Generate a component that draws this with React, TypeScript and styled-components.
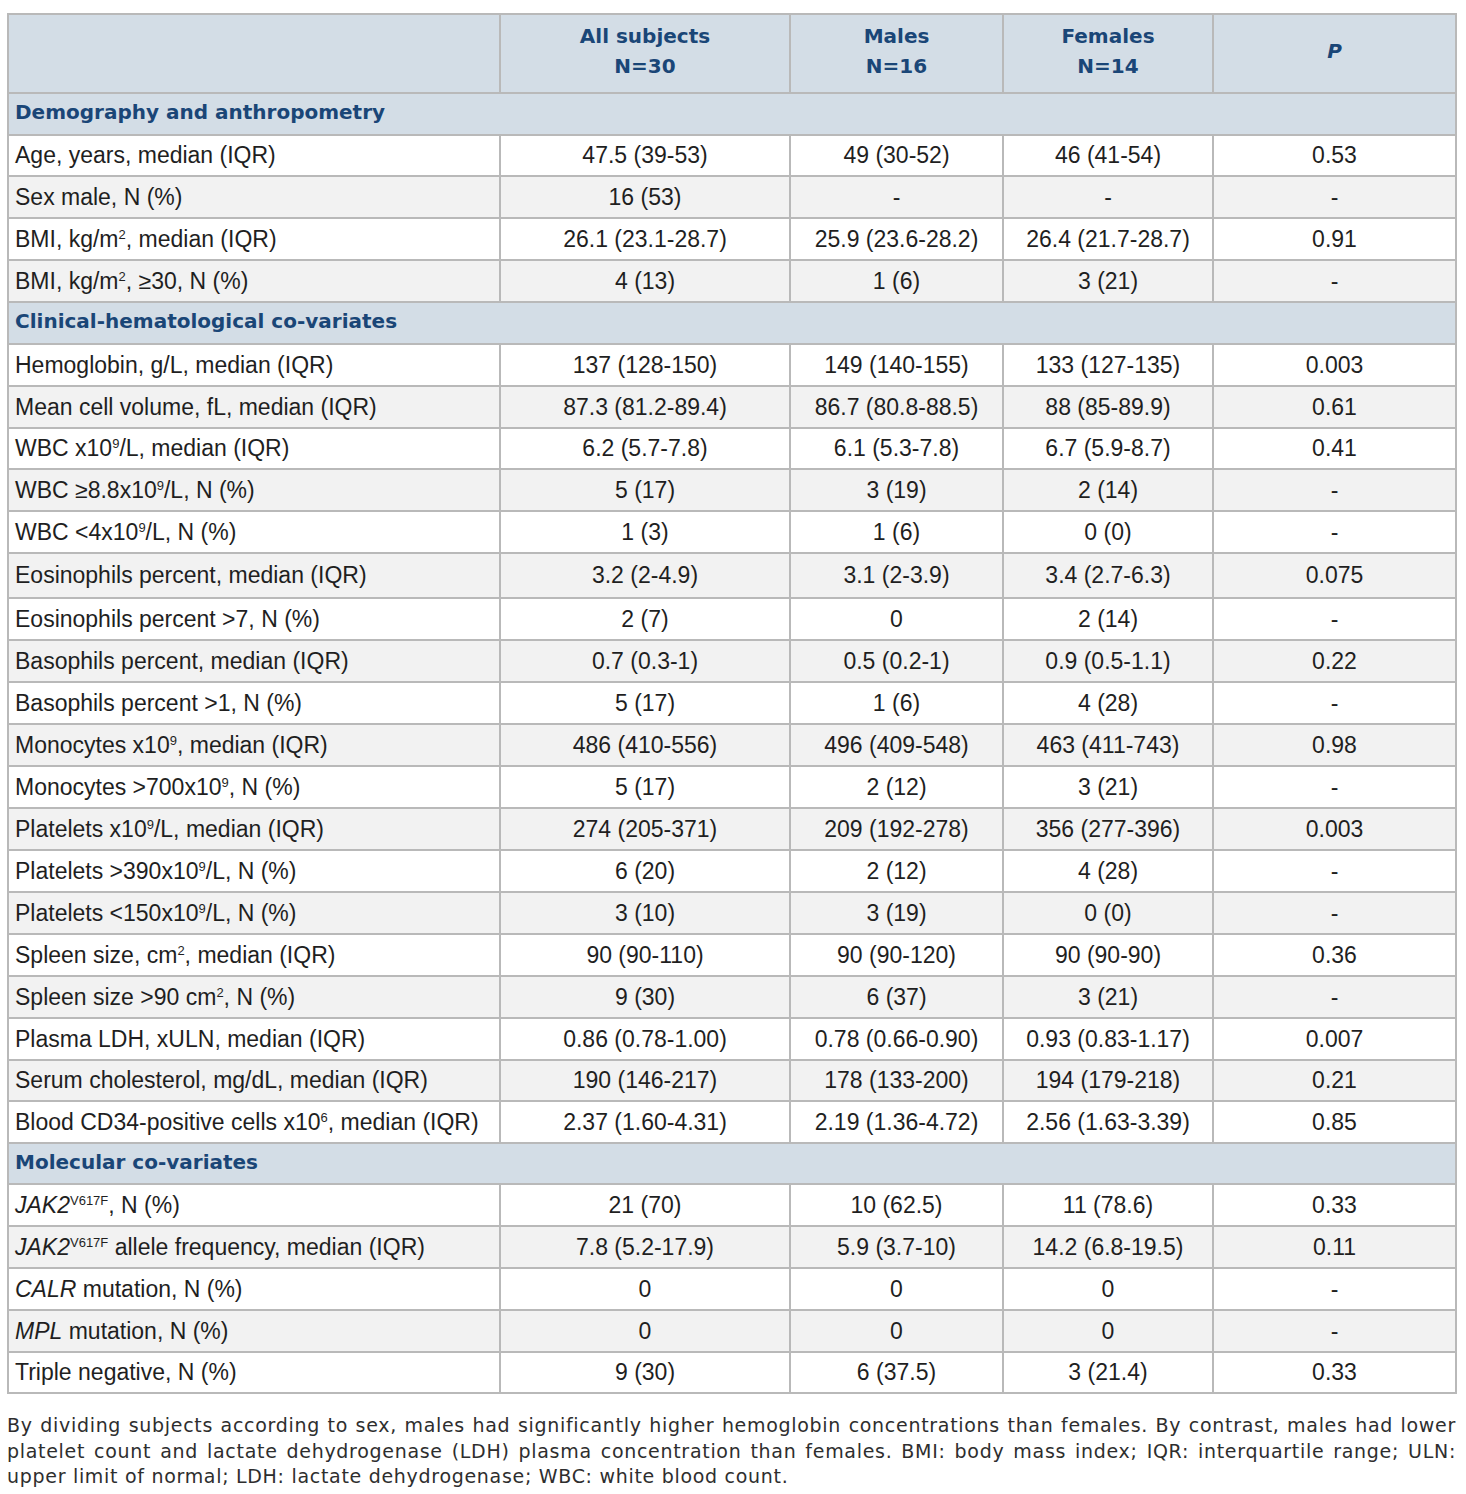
import React from "react";
import styled, { createGlobalStyle } from "styled-components";

const Global = createGlobalStyle`
  html, body { margin: 0; padding: 0; background: #ffffff; }
  body { font-family: "Liberation Sans", Arial, sans-serif; color: #1f1f1f; }
`;

const Page = styled.div`
  padding: 13px 11px 10px 7px;
  width: 1449px;
`;

const Table = styled.table`
  width: 1449px;
  table-layout: fixed;
  border-collapse: collapse;
  border: 2px solid #b9b9b9;
  font-family: "Liberation Sans", Arial, sans-serif;
  font-size: 23px;
  color: #1f1f1f;
`;

const HeadRow = styled.tr`
  height: 79px;
  background: #d3dde6;
`;

const HeadCell = styled.th`
  border: 2px solid #b9b9b9;
  padding: 0 6px 5px;
  text-align: center;
  vertical-align: middle;
  font-family: "DejaVu Sans", Verdana, sans-serif;
  font-weight: 700;
  font-size: 20px;
  line-height: 30px;
  color: #1a4677;
`;

const PLabel = styled.span`
  font-style: italic;
`;

const SectionRow = styled.tr<{ $h: number }>`
  height: ${(p) => p.$h}px;
  background: #d3dde6;
`;

const SectionCell = styled.td`
  border: 2px solid #b9b9b9;
  padding: 0 6px 4px;
  font-family: "DejaVu Sans", Verdana, sans-serif;
  font-weight: 700;
  font-size: 20px;
  color: #1a4677;
  vertical-align: middle;
`;

const DataRow = styled.tr<{ $alt: boolean; $h: number }>`
  height: ${(p) => p.$h}px;
  background: ${(p) => (p.$alt ? "#f2f2f2" : "#ffffff")};
`;

const LabelCell = styled.td`
  border: 2px solid #b9b9b9;
  padding: 0 6px;
  text-align: left;
  vertical-align: middle;
  white-space: nowrap;
`;

const ValueCell = styled.td`
  border: 2px solid #b9b9b9;
  padding: 0 4px;
  text-align: center;
  vertical-align: middle;
  white-space: nowrap;
`;

const Sup = styled.sup`
  font-size: 13px;
  line-height: 0;
  vertical-align: 8px;
`;

const Gene = styled.i`
  font-style: italic;
`;

const Caption = styled.div`
  margin-top: 19px;
  width: 1449px;
  font-family: "DejaVu Sans", Verdana, sans-serif;
  font-size: 19px;
  line-height: 25.5px;
  color: #2e2e2e;
  letter-spacing: 0.7px;
`;

const CaptionLine = styled.div<{ $last?: boolean }>`
  text-align: justify;
  text-align-last: ${(p) => (p.$last ? "left" : "justify")};
  white-space: nowrap;
`;

type Row = { label: React.ReactNode; v: [string, string, string, string]; h?: number };
type Section = { title: string; h?: number; rows: Row[] };

const x9 = (
  <>
    x10<Sup>9</Sup>
  </>
);
const m2 = (
  <>
    m<Sup>2</Sup>
  </>
);
const jak = (
  <>
    <Gene>JAK2</Gene>
    <Sup>V617F</Sup>
  </>
);

const sections: Section[] = [
  {
    title: "Demography and anthropometry",
    rows: [
      { label: "Age, years, median (IQR)", v: ["47.5 (39-53)", "49 (30-52)", "46 (41-54)", "0.53"], h: 41 },
      { label: "Sex male, N (%)", v: ["16 (53)", "-", "-", "-"] },
      { label: <>BMI, kg/{m2}, median (IQR)</>, v: ["26.1 (23.1-28.7)", "25.9 (23.6-28.2)", "26.4 (21.7-28.7)", "0.91"] },
      { label: <>BMI, kg/{m2}, ≥30, N (%)</>, v: ["4 (13)", "1 (6)", "3 (21)", "-"] },
    ],
  },
  {
    title: "Clinical-hematological co-variates",
    rows: [
      { label: "Hemoglobin, g/L, median (IQR)", v: ["137 (128-150)", "149 (140-155)", "133 (127-135)", "0.003"] },
      { label: "Mean cell volume, fL, median (IQR)", v: ["87.3 (81.2-89.4)", "86.7 (80.8-88.5)", "88 (85-89.9)", "0.61"] },
      { label: <>WBC {x9}/L, median (IQR)</>, v: ["6.2 (5.7-7.8)", "6.1 (5.3-7.8)", "6.7 (5.9-8.7)", "0.41"], h: 41 },
      { label: <>WBC ≥8.8{x9}/L, N (%)</>, v: ["5 (17)", "3 (19)", "2 (14)", "-"] },
      { label: <>WBC &lt;4{x9}/L, N (%)</>, v: ["1 (3)", "1 (6)", "0 (0)", "-"] },
      { label: "Eosinophils percent, median (IQR)", v: ["3.2 (2-4.9)", "3.1 (2-3.9)", "3.4 (2.7-6.3)", "0.075"], h: 45 },
      { label: "Eosinophils percent >7, N (%)", v: ["2 (7)", "0", "2 (14)", "-"] },
      { label: "Basophils percent, median (IQR)", v: ["0.7 (0.3-1)", "0.5 (0.2-1)", "0.9 (0.5-1.1)", "0.22"] },
      { label: "Basophils percent >1, N (%)", v: ["5 (17)", "1 (6)", "4 (28)", "-"] },
      { label: <>Monocytes {x9}, median (IQR)</>, v: ["486 (410-556)", "496 (409-548)", "463 (411-743)", "0.98"] },
      { label: <>Monocytes &gt;700{x9}, N (%)</>, v: ["5 (17)", "2 (12)", "3 (21)", "-"] },
      { label: <>Platelets {x9}/L, median (IQR)</>, v: ["274 (205-371)", "209 (192-278)", "356 (277-396)", "0.003"] },
      { label: <>Platelets &gt;390{x9}/L, N (%)</>, v: ["6 (20)", "2 (12)", "4 (28)", "-"] },
      { label: <>Platelets &lt;150{x9}/L, N (%)</>, v: ["3 (10)", "3 (19)", "0 (0)", "-"] },
      { label: <>Spleen size, c{m2}, median (IQR)</>, v: ["90 (90-110)", "90 (90-120)", "90 (90-90)", "0.36"] },
      { label: <>Spleen size &gt;90 c{m2}, N (%)</>, v: ["9 (30)", "6 (37)", "3 (21)", "-"] },
      { label: "Plasma LDH, xULN, median (IQR)", v: ["0.86 (0.78-1.00)", "0.78 (0.66-0.90)", "0.93 (0.83-1.17)", "0.007"] },
      { label: "Serum cholesterol, mg/dL, median (IQR)", v: ["190 (146-217)", "178 (133-200)", "194 (179-218)", "0.21"], h: 41 },
      {
        label: (
          <>
            Blood CD34-positive cells x10<Sup>6</Sup>, median (IQR)
          </>
        ),
        v: ["2.37 (1.60-4.31)", "2.19 (1.36-4.72)", "2.56 (1.63-3.39)", "0.85"],
      },
    ],
  },
  {
    title: "Molecular co-variates",
    h: 41,
    rows: [
      { label: <>{jak}, N (%)</>, v: ["21 (70)", "10 (62.5)", "11 (78.6)", "0.33"] },
      { label: <>{jak} allele frequency, median (IQR)</>, v: ["7.8 (5.2-17.9)", "5.9 (3.7-10)", "14.2 (6.8-19.5)", "0.11"] },
      { label: <><Gene>CALR</Gene> mutation, N (%)</>, v: ["0", "0", "0", "-"] },
      { label: <><Gene>MPL</Gene> mutation, N (%)</>, v: ["0", "0", "0", "-"] },
      { label: "Triple negative, N (%)", v: ["9 (30)", "6 (37.5)", "3 (21.4)", "0.33"], h: 41 },
    ],
  },
];

const colWidths = [492, 290, 213, 210, 243];

export default function App() {
  return (
    <Page>
      <Global />
      <Table>
        <colgroup>
          {colWidths.map((w, i) => (
            <col key={i} style={{ width: w }} />
          ))}
        </colgroup>
        <thead>
          <HeadRow>
            <HeadCell />
            <HeadCell>
              All subjects
              <br />
              N=30
            </HeadCell>
            <HeadCell>
              Males
              <br />
              N=16
            </HeadCell>
            <HeadCell>
              Females
              <br />
              N=14
            </HeadCell>
            <HeadCell>
              <PLabel>P</PLabel>
            </HeadCell>
          </HeadRow>
        </thead>
        <tbody>
          {sections.map((s) => (
            <React.Fragment key={s.title}>
              <SectionRow $h={s.h ?? 42}>
                <SectionCell colSpan={5}>{s.title}</SectionCell>
              </SectionRow>
              {s.rows.map((r, i) => (
                <DataRow key={i} $alt={i % 2 === 1} $h={r.h ?? 42}>
                  <LabelCell>{r.label}</LabelCell>
                  {r.v.map((val, j) => (
                    <ValueCell key={j}>{val}</ValueCell>
                  ))}
                </DataRow>
              ))}
            </React.Fragment>
          ))}
        </tbody>
      </Table>
      <Caption>
        <CaptionLine>
          By dividing subjects according to sex, males had significantly higher hemoglobin concentrations than females. By contrast, males had lower
        </CaptionLine>
        <CaptionLine>
          platelet count and lactate dehydrogenase (LDH) plasma concentration than females. BMI: body mass index; IQR: interquartile range; ULN:
        </CaptionLine>
        <CaptionLine $last>
          upper limit of normal; LDH: lactate dehydrogenase; WBC: white blood count.
        </CaptionLine>
      </Caption>
    </Page>
  );
}
